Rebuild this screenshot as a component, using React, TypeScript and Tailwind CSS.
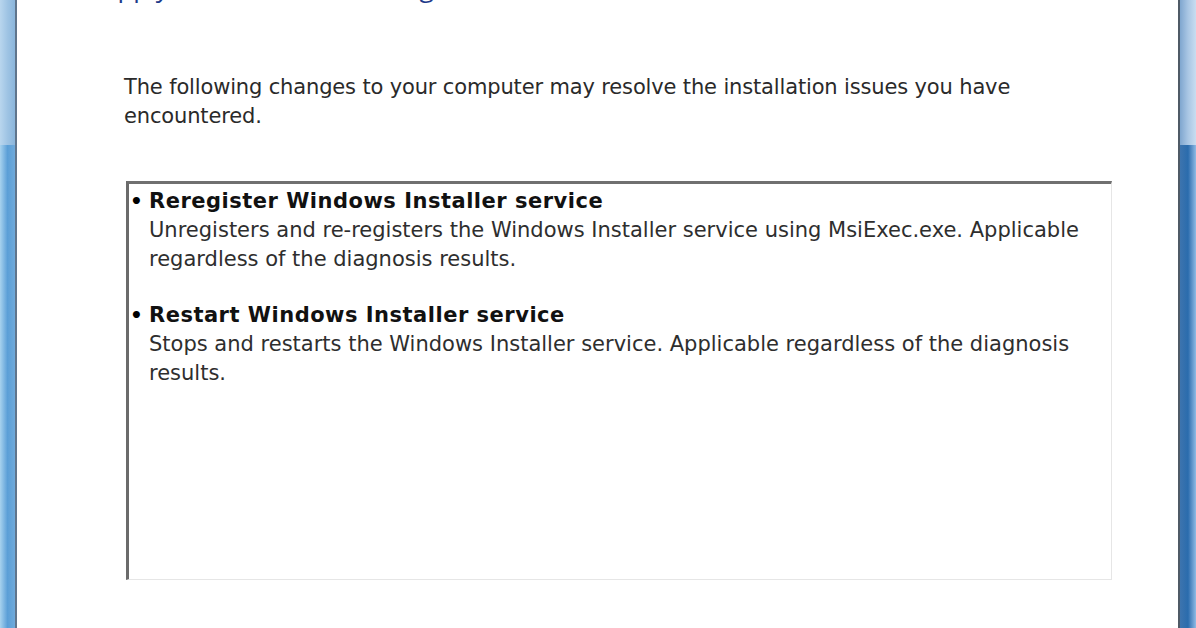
import React from "react";

const items = [
  {
    title: "Reregister Windows Installer service",
    desc: "Unregisters and re-registers the Windows Installer service using MsiExec.exe. Applicable regardless of the diagnosis results.",
  },
  {
    title: "Restart Windows Installer service",
    desc: "Stops and restarts the Windows Installer service. Applicable regardless of the diagnosis results.",
  },
];

export default function App() {
  return (
    <div className="flex h-[628px] w-[1196px] overflow-hidden bg-white font-['DejaVu_Sans',sans-serif]">
      {/* Left window frame */}
      <div className="flex w-[15px] flex-col">
        <div className="h-[145px] bg-gradient-to-r from-[#b9d6ee] via-[#9fc4e4] to-[#8bb6dc]" />
        <div className="flex-1 bg-gradient-to-r from-[#a7d2ee] via-[#5b9fd7] to-[#6faadb]" />
      </div>
      <div className="w-[2px] bg-[#60758c]" />

      {/* Content */}
      <div className="relative flex-1 bg-white">
        {/* heading, mostly scrolled above the visible area */}
        <div className="absolute left-[84px] top-[-31px] text-[26px] leading-[36px] text-[#1e3a8a] font-['Open_Sans',sans-serif]">
          Apply recommended changes
        </div>

        <div className="flex flex-col pl-[107px] pr-[66px] pt-[73px]">
          <p className="text-[21px] leading-[29px] text-[#2a2a2a] tracking-[-0.15px]">
            The following changes to your computer may resolve the installation issues you have encountered.
          </p>

          <div className="mt-[50px] ml-[2px] h-[399px] border-l-[3px] border-t-[3px] border-r border-b border-l-[#6b6b6b] border-t-[#707070] border-r-[#e6e6e6] border-b-[#e6e6e6] bg-white pt-[3px]">
            <ul className="flex flex-col gap-[27px]">
              {items.map((it) => (
                <li key={it.title} className="flex">
                  <span className="w-[20px] pl-[1px] text-[20px] font-bold leading-[29px] text-black">•</span>
                  <div className="flex-1 pr-[20px]">
                    <div className="text-[21px] font-bold leading-[29px] text-[#111] tracking-[0.5px]">{it.title}</div>
                    <div className="text-[21px] leading-[29px] text-[#2e2e2e]">{it.desc}</div>
                  </div>
                </li>
              ))}
            </ul>
          </div>
        </div>
      </div>

      {/* Right window frame */}
      <div className="w-[2px] bg-[#4f5a66]" />
      <div className="flex w-[16px] flex-col">
        <div className="h-[145px] bg-gradient-to-r from-[#7fa6cf] via-[#a9c6e4] to-[#c9ddf0]" />
        <div className="flex-1 bg-gradient-to-r from-[#3d74ae] via-[#2a6cad] to-[#8fbbe5]" />
      </div>
    </div>
  );
}
